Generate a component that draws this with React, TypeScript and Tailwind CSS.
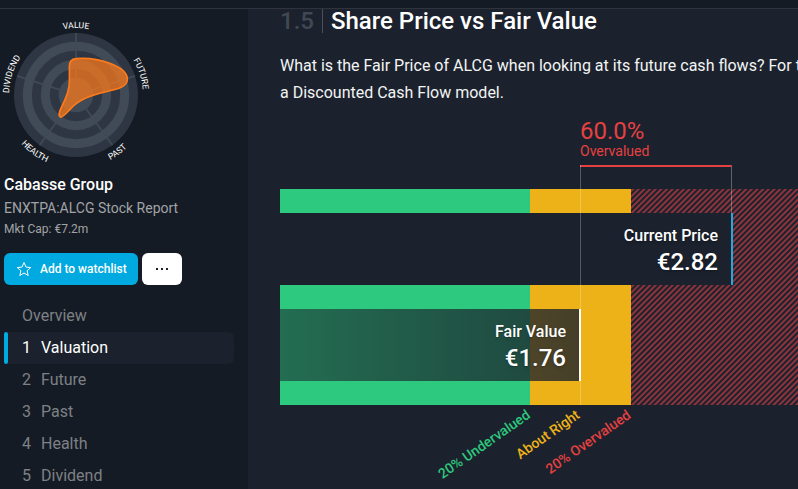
const CHART_WIDTH = 600;
const FAIR_VALUE = 300;
const CURRENT_PRICE = 452;

const SEGMENTS = [
  { id: 'under', size: 250, className: 'bg-[#2dc97e]' },
  { id: 'right', size: 101, className: 'bg-[#eeb219]' },
  {
    id: 'over',
    size: 249,
    className:
      'bg-[repeating-linear-gradient(135deg,#1b222d_0px,#8e333c_1px,#8e333c_2px,#1b222d_3px,#1b222d_4px)]',
  },
];

const SCALE_LABELS = [
  { text: '20% Undervalued', at: 250, className: 'text-[#2dc97e]' },
  { text: 'About Right', at: 300, className: 'text-[#eeb219]' },
  { text: '20% Overvalued', at: 351, className: 'text-[#e64141]' },
];

const NAV_ITEMS = ['Valuation', 'Future', 'Past', 'Health', 'Dividend'];

const SPOKES = [0, 72, 144, 216, 288];

const percent = (value: number) => `${(value / CHART_WIDTH) * 100}%`;

export default function App() {
  return (
    <div className="flex h-screen flex-col overflow-hidden bg-[#1b222d] font-['Roboto',sans-serif] text-white">
      <header className="h-[9px] shrink-0 border-b border-[#2e333d] bg-[#151b24]" />
      <div className="flex min-h-0 flex-1">
        <Sidebar />
        <main className="min-w-0 flex-1 overflow-hidden pl-8">
          <FairValueSection />
        </main>
      </div>
    </div>
  );
}

function Sidebar() {
  return (
    <aside className="w-[248px] shrink-0 overflow-hidden bg-[#151b24] pt-2.5">
      <Snowflake />
      <div className="px-1 pt-0.5">
        <h1 className="text-base leading-6 font-medium">Cabasse Group</h1>
        <p className="text-sm leading-[22px] text-[#a1a4a7]">ENXTPA:ALCG Stock Report</p>
        <p className="text-xs leading-5 text-[#a1a4a7]">Mkt Cap: €7.2m</p>
        <div className="mt-3.5 flex gap-1">
          <button
            type="button"
            className="flex h-8 items-center gap-2 rounded-md bg-[#00a9e0] pr-[11px] pl-3 text-xs font-medium"
          >
            <StarIcon />
            Add to watchlist
          </button>
          <button
            type="button"
            aria-label="More options"
            className="flex h-8 w-10 items-center justify-center rounded-md bg-white"
          >
            <DotsIcon />
          </button>
        </div>
      </div>
      <nav className="mt-[15px] mr-3.5 ml-1 text-base leading-8 text-[#7d8186]">
        <a href="#overview" className="block pl-[18px]">Overview</a>
        {NAV_ITEMS.map((item, i) => (
          <a
            key={item}
            href={`#${item.toLowerCase()}`}
            className={i === 0 ? 'flex rounded-md bg-[#1b222d] text-white' : 'flex'}
          >
            <span className={i === 0 ? 'mr-3.5 w-1 rounded-xs bg-[#00a9e0]' : 'mr-3.5 w-1'} />
            <span className="mr-2.5">{i + 1}</span>
            <span>{item}</span>
          </a>
        ))}
      </nav>
    </aside>
  );
}

function FairValueSection() {
  return (
    <section className="w-[600px]">
      <h2 className="flex h-[27px] items-start text-2xl leading-6 font-medium">
        <span className="border-r border-[#4a4f58] pr-2 text-[#424852]">1.5</span>
        <span className="pl-2">Share Price vs Fair Value</span>
      </h2>
      <p className="mt-4 text-base leading-[27px] whitespace-nowrap text-[#f3f4f4]">
        What is the Fair Price of ALCG when looking at its future cash flows? For this we use
        <br />
        a Discounted Cash Flow model.
      </p>
      <div className="mt-[13px] pl-[300px] text-[#e64141]">
        <div className="text-2xl leading-6">60.0%</div>
        <div className="text-sm leading-4">Overvalued</div>
      </div>
      <Chart />
    </section>
  );
}

function Chart() {
  const fair = percent(FAIR_VALUE);
  const price = percent(CURRENT_PRICE);

  return (
    <div className="relative mt-[30px] h-[216px]">
      <div className="flex h-full">
        {SEGMENTS.map((s) => (
          <div key={s.id} className={s.className} style={{ width: percent(s.size) }} />
        ))}
      </div>

      <PriceBar label="Current Price" value="€2.82" width={price} className="top-6 border-[#23a9dd] bg-[#1b222d]" />

      {/* bracket between the two prices */}
      <div
        className="absolute -top-6 h-12 border-t-2 border-r border-t-[#e64141] border-r-white/30"
        style={{ left: fair, width: percent(CURRENT_PRICE - FAIR_VALUE) }}
      />
      <div className="absolute -top-6 bottom-0 w-px bg-white/25" style={{ left: fair }} />

      <PriceBar
        label="Fair Value"
        value="€1.76"
        width={fair}
        className="top-[120px] border-white bg-linear-to-r from-[#1b222d]/55 to-[#1b222d]/80"
      />

      {SCALE_LABELS.map((l) => (
        <div key={l.text} className="absolute top-full h-0 w-0" style={{ left: percent(l.at) }}>
          <span
            className={`absolute top-0 right-0.5 origin-right -rotate-35 text-sm leading-4 font-medium whitespace-nowrap ${l.className}`}
          >
            {l.text}
          </span>
        </div>
      ))}
    </div>
  );
}

function PriceBar({
  label,
  value,
  width,
  className,
}: {
  label: string;
  value: string;
  width: string;
  className: string;
}) {
  return (
    <div
      className={`absolute left-0 flex h-[72px] flex-col items-end border-r-2 pt-[11px] pr-[13px] font-medium text-shadow-md ${className}`}
      style={{ width: `calc(${width} + 1px)` }}
    >
      <div className="text-base leading-6">{label}</div>
      <div className="text-2xl leading-7">{value}</div>
    </div>
  );
}

function Snowflake() {
  return (
    <svg viewBox="0 0 456 456" className="block h-[152px] w-[152px] overflow-visible" role="img" aria-label="Snowflake analysis">
      <defs>
        <path id="arc-top" d="M27 228a201 201 0 0 1 402 0a201 201 0 0 1 -402 0" />
        <path id="arc-side" d="M228 429a201 201 0 0 1 0 -402a201 201 0 0 1 0 402" />
        <path id="arc-bottom" d="M8 228a220 220 0 0 0 440 0" />
      </defs>
      <circle cx="228" cy="228" r="186" fill="#2e3644" />
      <circle cx="228" cy="228" r="146" fill="none" stroke="#414b57" strokeWidth="27" />
      <circle cx="228" cy="228" r="92" fill="none" stroke="#414b57" strokeWidth="27" />
      <circle cx="228" cy="228" r="52" fill="#414b57" />
      {SPOKES.map((deg) => (
        <path key={deg} d="M228 228V42" stroke="#414b57" strokeWidth="5" transform={`rotate(${deg} 228 228)`} />
      ))}
      <path
        d="M208 144C208 127 214 120 228 119C290 113 384 140 382 182C380 226 266 206 210 271C196 285 187 297 181 294C171 288 184 266 194 244C212 206 208 186 208 144Z"
        fill="#ff7a1a"
        fillOpacity="0.72"
        stroke="#ff7a1a"
        strokeWidth="5"
      />
      <g fill="#fff" fontSize="26" textAnchor="middle">
        <text><textPath href="#arc-top" startOffset="25%">VALUE</textPath></text>
        <text><textPath href="#arc-side" startOffset="70%">FUTURE</textPath></text>
        <text><textPath href="#arc-side" startOffset="30%">DIVIDEND</textPath></text>
        <text><textPath href="#arc-bottom" startOffset="70%">PAST</textPath></text>
        <text><textPath href="#arc-bottom" startOffset="30%">HEALTH</textPath></text>
      </g>
    </svg>
  );
}

function StarIcon() {
  return (
    <svg viewBox="0 0 16 16" className="h-4 w-4" fill="none" stroke="currentColor" strokeLinejoin="round">
      <path d="M8 1.5L10 6.1L14.8 6.5L11.1 9.7L12.2 14.5L8 12L3.8 14.5L4.9 9.7L1.2 6.5L6 6.1Z" />
    </svg>
  );
}

function DotsIcon() {
  return (
    <svg viewBox="0 0 12 2" className="h-0.5 w-3" fill="#1b222d">
      <rect width="2" height="2" />
      <rect x="5" width="2" height="2" />
      <rect x="10" width="2" height="2" />
    </svg>
  );
}
